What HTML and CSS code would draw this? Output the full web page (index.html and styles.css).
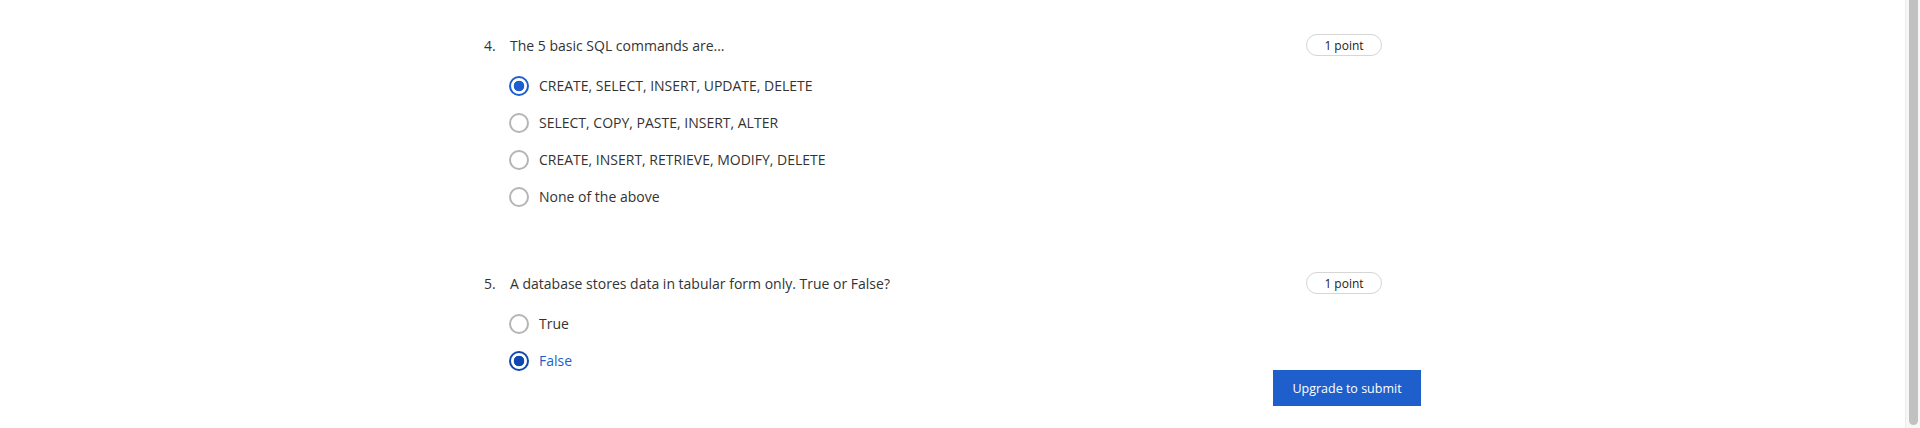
FILE: index.html
```html
<!DOCTYPE html>
<html lang="en">
<head>
<meta charset="utf-8">
<title>Quiz</title>
<link rel="stylesheet" href="styles.css">
</head>
<body>
<div class="page">
  <main class="quiz">
    <section class="question">
      <div class="q-head">
        <span class="q-num">4.</span>
        <span class="q-text">The 5 basic SQL commands are...</span>
        <span class="badge">1 point</span>
      </div>
      <ul class="options">
        <li class="option checked"><span class="radio"></span><span class="label">CREATE, SELECT, INSERT, UPDATE, DELETE</span></li>
        <li class="option"><span class="radio"></span><span class="label">SELECT, COPY, PASTE, INSERT, ALTER</span></li>
        <li class="option"><span class="radio"></span><span class="label">CREATE, INSERT, RETRIEVE, MODIFY, DELETE</span></li>
        <li class="option"><span class="radio"></span><span class="label">None of the above</span></li>
      </ul>
    </section>
    <section class="question">
      <div class="q-head">
        <span class="q-num">5.</span>
        <span class="q-text">A database stores data in tabular form only. True or False?</span>
        <span class="badge">1 point</span>
      </div>
      <ul class="options">
        <li class="option"><span class="radio"></span><span class="label">True</span></li>
        <li class="option checked focused"><span class="radio"></span><span class="label">False</span></li>
      </ul>
    </section>
  </main>
  <div class="submit-bar">
    <button class="submit" type="button">Upgrade to submit</button>
  </div>
</div>
<div class="scrollbar"><div class="thumb"></div></div>
</body>
</html>
```
FILE: styles.css
```css
html, body {
  margin: 0;
  padding: 0;
  background: #ffffff;
  overflow: hidden;
}
body {
  font-family: "Open Sans", "Liberation Sans", sans-serif;
  color: #333333;
  font-size: 14px;
}
.page {
  padding-right: 15px;
}
.quiz {
  width: 937px;
  margin: 0 auto;
  padding-top: 34px;
}
.question {
  padding-right: 39px;
}
.question + .question {
  margin-top: 57px;
}
.q-head {
  display: flex;
  align-items: center;
  height: 22px;
}
.q-num {
  width: 26px;
  flex: none;
}
.q-text {
  flex: 1;
}
.badge {
  flex: none;
  box-sizing: border-box;
  width: 76px;
  height: 22px;
  border: 1px solid #d6d6d6;
  border-radius: 11px;
  display: flex;
  align-items: center;
  justify-content: center;
  font-size: 12px;
  color: #222;
}
.options {
  list-style: none;
  margin: 11px 0 0 0;
  padding: 0 0 0 25px;
}
.option {
  display: flex;
  align-items: center;
  height: 37px;
}
.radio {
  box-sizing: border-box;
  width: 20px;
  height: 20px;
  border-radius: 50%;
  border: 2px solid #b5b5b5;
  margin-right: 10px;
  flex: none;
  position: relative;
}
.option.checked .radio {
  border-color: #1f5fcd;
  background: radial-gradient(circle, #1f5fcd 0 5px, #ffffff 5.6px);
}
.option.focused .radio {
  border-color: #0f48b0;
  background: radial-gradient(circle, #0f48b0 0 5px, #ffffff 5.6px);
}
.option.focused .label {
  color: #1f5fcd;
}
.submit-bar {
  position: fixed;
  left: 0;
  right: 15px;
  bottom: 22px;
  display: flex;
  justify-content: center;
  pointer-events: none;
}
.submit {
  pointer-events: auto;
  margin-left: 789px;
  width: 148px;
  height: 36px;
  border: none;
  border-radius: 0;
  background: #1e5fcc;
  color: #ffffff;
  font-family: "Open Sans", "Liberation Sans", sans-serif;
  font-size: 12.5px;
  padding: 0;
}
.scrollbar {
  position: fixed;
  top: 0;
  right: 0;
  width: 15px;
  height: 100%;
  background: #f7f7f7;
  border-left: 1px solid #ececec;
  box-sizing: border-box;
}
.thumb {
  position: absolute;
  left: 3px;
  width: 9px;
  top: -6px;
  bottom: 3px;
  border-radius: 5px;
  background: #c1c1c1;
}
```
